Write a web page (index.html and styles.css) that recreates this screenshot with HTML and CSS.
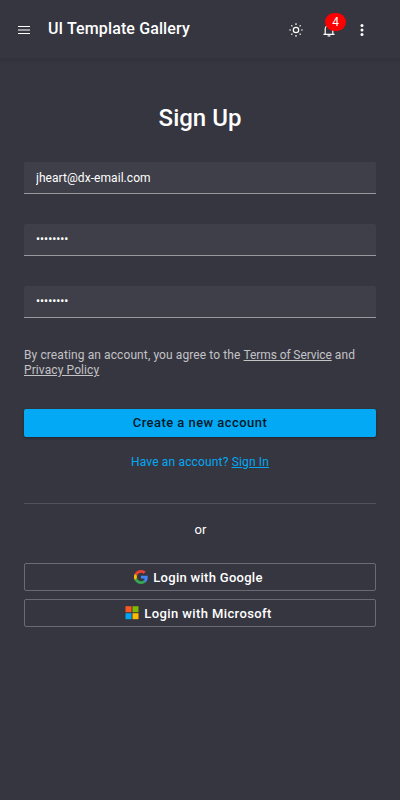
FILE: index.html
```html
<!DOCTYPE html>
<html lang="en">
<head>
<meta charset="utf-8">
<title>UI Template Gallery</title>
<link rel="stylesheet" href="styles.css">
</head>
<body>
<header class="toolbar">
  <button class="icon-btn" aria-label="Menu">
    <svg width="14" height="14" viewBox="0 0 14 14"><path d="M1 3.5h12M1 7h12M1 10.5h12" fill="none" stroke="#fff" stroke-width="1.2"/></svg>
  </button>
  <div class="brand">UI Template Gallery</div>
  <button class="icon-btn" aria-label="Theme">
    <svg width="14" height="14" viewBox="0 0 14 14" fill="none" stroke="#fff" stroke-width="1.2"><circle cx="7" cy="7" r="2.7"/><path d="M7 .3v1.6M7 12.1v1.6M.3 7h1.6M12.1 7h1.6M2.3 2.3l1.1 1.1M10.6 10.6l1.1 1.1M2.3 11.7l1.1-1.1M10.6 3.4l1.1-1.1"/></svg>
  </button>
  <button class="icon-btn" aria-label="Notifications">
    <svg width="14" height="14" viewBox="0 0 14 14"><path d="M3.2 11V6a3.8 3.8 0 0 1 7.6 0v5M1.5 11.3h11" fill="none" stroke="#fff" stroke-width="1.2"/><path d="M5.6 12.3h2.8v1.2H5.6z" fill="#fff"/></svg>
    <span class="badge">4</span>
  </button>
  <button class="icon-btn" aria-label="More">
    <svg width="14" height="14" viewBox="0 0 14 14" fill="#fff"><circle cx="7" cy="2.6" r="1.5"/><circle cx="7" cy="7" r="1.5"/><circle cx="7" cy="11.4" r="1.5"/></svg>
  </button>
</header>
<main class="card">
  <h1 class="title">Sign Up</h1>
  <form class="form">
    <input class="field" type="text" value="jheart@dx-email.com" aria-label="Email">
    <input class="field password" type="password" value="password" aria-label="Password">
    <input class="field password" type="password" value="password" aria-label="Confirm password">
    <p class="policy">By creating an account, you agree to the <a class="terms" href="#">Terms of Service</a> and <a href="#">Privacy Policy</a></p>
    <button class="btn primary" type="button">Create a new account</button>
  </form>
  <p class="signin">Have an account? <a href="#">Sign In</a></p>
  <hr class="divider">
  <p class="or">or</p>
  <button class="btn outlined google" type="button">
    <svg width="14" height="14" viewBox="0 0 48 48"><path fill="#EA4335" d="M24 9.5c3.54 0 6.71 1.22 9.21 3.6l6.85-6.85C35.9 2.38 30.47 0 24 0 14.62 0 6.51 5.38 2.56 13.22l7.98 6.19C12.43 13.72 17.74 9.5 24 9.5z"/><path fill="#4285F4" d="M46.98 24.55c0-1.57-.15-3.09-.38-4.55H24v9.02h12.94c-.58 2.96-2.26 5.48-4.78 7.18l7.73 6c4.51-4.18 7.09-10.36 7.09-17.65z"/><path fill="#FBBC05" d="M10.53 28.59A14.5 14.5 0 0 1 10.53 19.41l-7.98-6.19a24 24 0 0 0 0 21.56l7.98-6.19z"/><path fill="#34A853" d="M24 48c6.48 0 11.93-2.13 15.89-5.81l-7.73-6c-2.15 1.45-4.92 2.3-8.16 2.3-6.26 0-11.57-4.22-13.47-9.91l-7.98 6.19C6.51 42.62 14.62 48 24 48z"/></svg>
    <span>Login with Google</span>
  </button>
  <button class="btn outlined microsoft" type="button">
    <svg width="14" height="14" viewBox="0 0 14 14"><path fill="#FF5722" d="M.5 .2h6v6h-6z"/><path fill="#7FBA00" d="M7.5 .2h6v6h-6z"/><path fill="#03A4F0" d="M.5 7.2h6v6h-6z"/><path fill="#FFB900" d="M7.5 7.2h6v6h-6z"/></svg>
    <span>Login with Microsoft</span>
  </button>
</main>
</body>
</html>
```
FILE: styles.css
```css
* { box-sizing: border-box; }
body {
  margin: 0;
  min-height: 100vh;
  background: #363640;
  color: #fff;
  font-family: Roboto, sans-serif;
  font-size: 12px;
  line-height: 15px;
}
.toolbar {
  display: flex;
  align-items: center;
  height: 58px;
  padding: 1px 22px 0 7px;
  box-shadow: 0 2px 4px rgba(0, 0, 0, .12);
}
.icon-btn {
  position: relative;
  display: flex;
  align-items: center;
  justify-content: center;
  width: 33px;
  height: 33px;
  padding: 0;
  border: 0;
  background: none;
}
.brand {
  flex: 1;
  padding: 0 0 1px 8px;
  font-size: 16px;
  font-weight: 500;
  line-height: 20px;
  letter-spacing: .12px;
}
.badge {
  position: absolute;
  top: 0;
  left: 13px;
  width: 21px;
  height: 18px;
  border-radius: 9px;
  background: #f00;
  color: #fff;
  font: 12px/18px Roboto, sans-serif;
  text-align: center;
}
.card { padding: 44px 24px 0; }
.title {
  margin: 0 0 28px;
  font-size: 24px;
  font-weight: 500;
  line-height: 32px;
  text-align: center;
}
.form { display: flex; flex-direction: column; }
.field {
  width: 100%;
  height: 32px;
  margin-bottom: 30px;
  padding: 0 12px;
  border: 0;
  border-bottom: 1px solid #97979c;
  border-radius: 2px 2px 0 0;
  outline: 0;
  background: #3f3f49;
  color: #fff;
  font: 12px Roboto, sans-serif;
  letter-spacing: .06px;
}
.password {
  padding-bottom: 1px;
  letter-spacing: 0;
}
.policy { margin: 0 0 31px; color: #c3c3c6; letter-spacing: .1px; }
.terms { letter-spacing: -.1px; }
a { color: inherit; }
.btn {
  display: flex;
  align-items: center;
  justify-content: center;
  gap: 5px;
  width: 100%;
  height: 28px;
  padding: 0;
  border: 0;
  border-radius: 2px;
  font: 500 13px/16px Roboto, sans-serif;
  letter-spacing: .45px;
}
.primary {
  background: #03a9f4;
  color: rgba(0, 0, 0, .87);
  box-shadow: 0 1px 3px rgba(0, 0, 0, .35);
}
.signin {
  margin: 18px 0 33px;
  color: #03a9f4;
  letter-spacing: .16px;
  text-align: center;
}
.divider { margin: 0; border: 0; border-top: 1px solid #515159; }
.or { margin: 18px 0 26px; font-size: 13px; text-indent: 1px; text-align: center; }
.outlined {
  margin-bottom: 8px;
  border: 1px solid #6a6a72;
  background: none;
  color: #fff;
}
.outlined span { padding-top: 2px; }
.google { padding-right: 3px; letter-spacing: .29px; }
.microsoft { padding-right: 3px; letter-spacing: .4px; }
```
